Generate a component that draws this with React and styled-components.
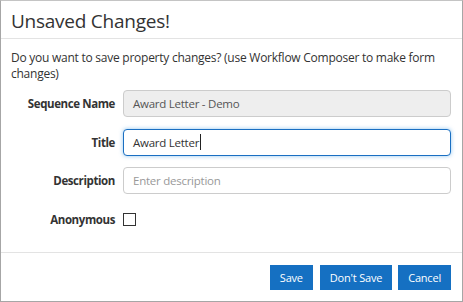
import React from "react";
import styled, { createGlobalStyle, css } from "styled-components";

const GlobalStyle = createGlobalStyle`
  html, body {
    margin: 0;
    padding: 0;
    background: #fff;
  }
  body {
    font-family: "Open Sans", "Liberation Sans", Arial, sans-serif;
    color: #333;
  }
`;

const Dialog = styled.div`
  width: 463px;
  height: 302px;
  box-sizing: border-box;
  border: 1px solid #a6a6a6;
  border-top-color: #c4c4c4;
  display: flex;
  flex-direction: column;
  background: #fff;
`;

const Header = styled.div`
  height: 38px;
  box-sizing: border-box;
  padding: 0 11px 0 10px;
  border-bottom: 1px solid #e3e3e3;
  display: flex;
  align-items: center;
`;

const Title = styled.h4`
  margin: 0;
  padding-top: 3px;
  font-size: 19px;
  font-weight: 400;
  letter-spacing: -0.25px;
  line-height: 24px;
  color: #333;
`;

const Body = styled.div`
  flex: 1;
  padding: 11px 11px 0 10px;
  border-bottom: 1px solid #e3e3e3;
`;

const Intro = styled.p`
  margin: 0 0 8px;
  font-size: 12px;
  letter-spacing: -0.25px;
  line-height: 16px;
`;

const Form = styled.div`
  display: grid;
  grid-template-columns: 104px 1fr;
  column-gap: 8px;
  row-gap: 11.5px;
  align-items: center;
`;

const Label = styled.label`
  text-align: right;
  font-size: 11.5px;
  font-weight: 700;
  letter-spacing: -0.4px;
  color: #333;
`;

const Field = styled.div`
  height: 27px;
  box-sizing: border-box;
  border: 1px solid #ccc;
  border-radius: 4px;
  padding: 0 9px;
  display: flex;
  align-items: center;
  font-size: 11.5px;
  letter-spacing: -0.25px;
  color: #555;
  background: #fff;
  ${(p) =>
    p.$disabled &&
    css`
      background: #eee;
      color: #555;
    `}
  ${(p) =>
    p.$focused &&
    css`
      border-color: #1a6fc2;
      box-shadow: 0 0 4px rgba(102, 175, 233, 0.7);
      color: #333;
    `}
  ${(p) =>
    p.$placeholder &&
    css`
      color: #999;
    `}
`;

const Caret = styled.span`
  display: inline-block;
  width: 1px;
  height: 16px;
  background: #222;
  margin-left: 1px;
`;

const CheckRow = styled.div`
  height: 27px;
  display: flex;
  align-items: center;
`;

const Checkbox = styled.span`
  width: 13px;
  height: 13px;
  box-sizing: border-box;
  border: 1px solid #333;
  background: #fff;
`;

const Footer = styled.div`
  height: 48px;
  box-sizing: border-box;
  padding: 12px 11px 0 10px;
  display: flex;
  justify-content: flex-end;
  align-items: flex-start;
  gap: 6px;
`;

const Button = styled.button`
  height: 25px;
  padding: 0 10px;
  border: none;
  border-radius: 0;
  background: #1570c2;
  color: #fff;
  font-family: "Open Sans", "Liberation Sans", Arial, sans-serif;
  font-size: 11px;
  letter-spacing: -0.2px;
  line-height: 25px;
  margin-left: ${(p) => (p.$wide ? "1px" : "0")};
`;

export default function App() {
  return (
    <>
      <GlobalStyle />
      <Dialog>
        <Header>
          <Title>Unsaved Changes!</Title>
        </Header>
        <Body>
          <Intro>
            Do you want to save property changes? (use Workflow Composer to make form
            changes)
          </Intro>
          <Form>
            <Label>Sequence Name</Label>
            <Field $disabled>Award Letter - Demo</Field>
            <Label>Title</Label>
            <Field $focused>
              Award Letter
              <Caret />
            </Field>
            <Label>Description</Label>
            <Field $placeholder>Enter description</Field>
            <Label>Anonymous</Label>
            <CheckRow>
              <Checkbox />
            </CheckRow>
          </Form>
        </Body>
        <Footer>
          <Button>Save</Button>
          <Button $wide>Don't Save</Button>
          <Button>Cancel</Button>
        </Footer>
      </Dialog>
    </>
  );
}
